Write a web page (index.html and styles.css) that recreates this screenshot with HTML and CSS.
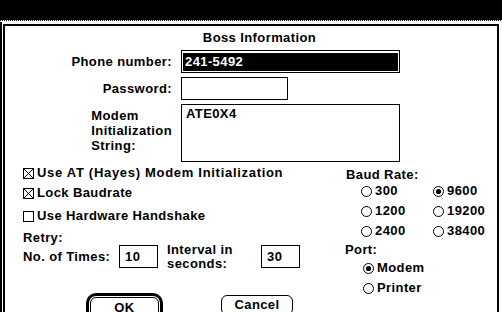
FILE: index.html
```html
<!DOCTYPE html>
<html>
<head>
<meta charset="utf-8">
<link rel="stylesheet" href="styles.css">
</head>
<body>
<div class="screen">
  <div class="titlebar"></div>
  <div class="dots"></div>
  <div class="outer">
    <div class="dialog">
      <div class="title">Boss Information</div>
      <div class="form">
        <div class="lbl">Phone number:</div>
        <div class="field phone"><span class="sel">241-5492</span></div>
        <div class="lbl">Password:</div>
        <div class="field pw"></div>
        <div class="lbl multi">Modem<br>Initialization<br>String:</div>
        <div class="field area">ATE0X4</div>
      </div>
      <div class="lower">
        <div class="left">
          <div class="check row1"><svg class="box" width="11" height="11" viewBox="0 0 11 11"><rect x="0.5" y="0.5" width="10" height="10" fill="#fff" stroke="#000"/><path d="M1 1L10 10M10 1L1 10" stroke="#000" stroke-width="1"/></svg>Use AT (Hayes) Modem Initialization</div>
          <div class="check"><svg class="box" width="11" height="11" viewBox="0 0 11 11"><rect x="0.5" y="0.5" width="10" height="10" fill="#fff" stroke="#000"/><path d="M1 1L10 10M10 1L1 10" stroke="#000" stroke-width="1"/></svg>Lock Baudrate</div>
          <div class="check row3"><svg class="box" width="11" height="11" viewBox="0 0 11 11"><rect x="0.5" y="0.5" width="10" height="10" fill="#fff" stroke="#000"/></svg>Use Hardware Handshake</div>
          <div class="retry">Retry:</div>
          <div class="times">
            <span class="times-label">No. of Times:</span>
            <div class="num">10</div>
            <span class="interval">Interval in<br>seconds:</span>
            <div class="num">30</div>
          </div>
          <div class="buttons">
            <div class="ring"><div class="btn ok">OK</div></div>
            <div class="btn cancel">Cancel</div>
          </div>
        </div>
        <div class="right">
          <div class="group baud">Baud Rate:</div>
          <div class="baud-grid">
            <div class="radio"><svg width="11" height="11" viewBox="0 0 11 11"><circle cx="5.5" cy="5.5" r="5" fill="#fff" stroke="#000"/></svg>300</div>
            <div class="radio"><svg width="11" height="11" viewBox="0 0 11 11"><circle cx="5.5" cy="5.5" r="5" fill="#fff" stroke="#000"/><circle cx="5.5" cy="5.5" r="2.6" fill="#000"/></svg>9600</div>
            <div class="radio"><svg width="11" height="11" viewBox="0 0 11 11"><circle cx="5.5" cy="5.5" r="5" fill="#fff" stroke="#000"/></svg>1200</div>
            <div class="radio"><svg width="11" height="11" viewBox="0 0 11 11"><circle cx="5.5" cy="5.5" r="5" fill="#fff" stroke="#000"/></svg>19200</div>
            <div class="radio"><svg width="11" height="11" viewBox="0 0 11 11"><circle cx="5.5" cy="5.5" r="5" fill="#fff" stroke="#000"/></svg>2400</div>
            <div class="radio"><svg width="11" height="11" viewBox="0 0 11 11"><circle cx="5.5" cy="5.5" r="5" fill="#fff" stroke="#000"/></svg>38400</div>
          </div>
          <div class="group port">Port:</div>
          <div class="port-list">
            <div class="radio"><svg width="11" height="11" viewBox="0 0 11 11"><circle cx="5.5" cy="5.5" r="5" fill="#fff" stroke="#000"/><circle cx="5.5" cy="5.5" r="2.6" fill="#000"/></svg>Modem</div>
            <div class="radio"><svg width="11" height="11" viewBox="0 0 11 11"><circle cx="5.5" cy="5.5" r="5" fill="#fff" stroke="#000"/></svg>Printer</div>
          </div>
        </div>
      </div>
    </div>
  </div>
</div>
</body>
</html>
```

FILE: styles.css
```css
html, body {
  margin: 0;
  padding: 0;
  background: #fff;
}
.screen {
  width: 502px;
  height: 312px;
  overflow: hidden;
  font-family: "Liberation Sans", Arial, sans-serif;
  font-weight: bold;
  font-size: 13px;
  letter-spacing: 0.4px;
  color: #000;
}
.titlebar {
  height: 20px;
  background: #000;
}
.dots {
  height: 1px;
  background: repeating-linear-gradient(90deg, #000 0 1px, #fff 1px 2px);
}
.outer {
  margin-top: 1px;
  border-left: 2px solid #000;
  padding: 2px 0 0 1px;
  height: 400px;
}
.dialog {
  box-sizing: border-box;
  width: 496px;
  height: 400px;
  border: 2px solid #000;
  border-bottom: none;
}
.title {
  margin-top: 4px;
  line-height: 15px;
  text-align: center;
  padding-left: 17px;
}
.form {
  margin-top: 5px;
  display: grid;
  grid-template-columns: 167px auto;
  column-gap: 9px;
  row-gap: 4px;
  align-items: center;
}
.lbl {
  justify-self: end;
  line-height: 15px;
}
.lbl.multi {
  align-self: start;
  text-align: left;
  padding-top: 4px;
}
.field {
  box-sizing: border-box;
  border: 1px solid #000;
  height: 23px;
}
.field.phone {
  width: 219px;
  padding: 2px 1px 1px 1px;
}
.sel {
  display: block;
  height: 100%;
  background: #000;
  color: #fff;
  line-height: 15px;
  padding: 1px 0 0 2px;
  box-sizing: border-box;
}
.field.pw {
  width: 107px;
}
.field.area {
  width: 219px;
  height: 58px;
  padding: 1px 0 0 4px;
  line-height: 15px;
}
.lower {
  display: flex;
}
.left {
  box-sizing: border-box;
  width: 340px;
  padding-left: 18px;
}
.check {
  display: flex;
  align-items: center;
  height: 20px;
  line-height: 20px;
}
.check .box {
  flex: none;
  margin-right: 3px;
}
.check.row1 {
  margin-top: 1px;
  letter-spacing: 0.7px;
}
.check.row3 {
  margin-top: 3px;
}
.retry {
  margin-top: 4px;
  line-height: 15px;
}
.times {
  display: flex;
  align-items: center;
  height: 23px;
}
.times-label {
  width: 96px;
}
.num {
  box-sizing: border-box;
  width: 39px;
  height: 23px;
  border: 1px solid #000;
  padding-left: 5px;
  line-height: 21px;
}
.interval {
  width: 94px;
  margin-left: 9px;
  line-height: 14px;
}
.buttons {
  display: flex;
  align-items: flex-start;
  margin-top: 25px;
}
.ring {
  box-sizing: border-box;
  width: 77px;
  margin-left: 63px;
  border: 3px solid #000;
  border-radius: 10px;
  padding: 1px;
}
.btn {
  box-sizing: border-box;
  height: 20px;
  border: 1px solid #000;
  border-radius: 6px;
  line-height: 18px;
  text-align: center;
}
.ok {
  padding-top: 1px;
}
.cancel {
  width: 72px;
  margin-left: 58px;
  margin-top: 2px;
}
.right {
  flex: 1;
}
.group.baud {
  margin-top: 7px;
  line-height: 12px;
  padding-left: 1px;
}
.baud-grid {
  display: grid;
  grid-template-columns: 72px auto;
  padding-left: 16px;
}
.radio {
  display: flex;
  align-items: center;
  height: 20px;
  line-height: 20px;
}
.radio svg {
  flex: none;
  margin-right: 3px;
}
.group.port {
  margin-top: 1px;
  line-height: 15px;
}
.port-list {
  margin-top: 1px;
  padding-left: 18px;
}
```
